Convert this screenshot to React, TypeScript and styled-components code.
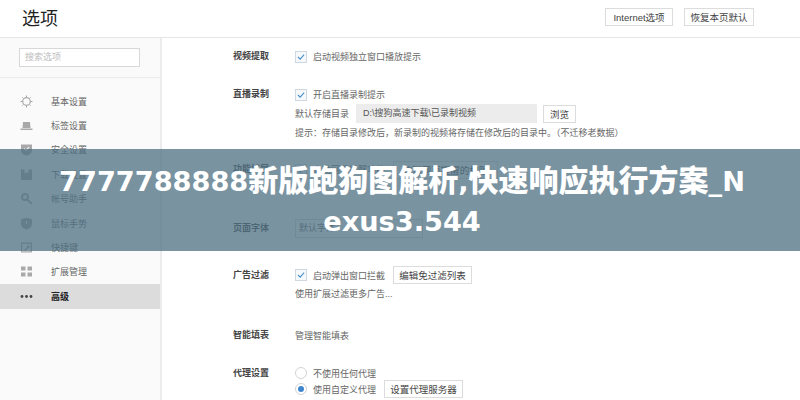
import React from 'react';
import styled, { createGlobalStyle } from 'styled-components';

const FONT = '"Liberation Sans", "Noto Sans CJK SC", sans-serif';

const GlobalStyle = createGlobalStyle`
  html, body {
    margin: 0;
    padding: 0;
    background: #fff;
  }
  body {
    width: 800px;
    height: 400px;
    overflow: hidden;
    font-family: ${FONT};
  }
`;

const Page = styled.div`
  position: relative;
  width: 800px;
  height: 400px;
  overflow: hidden;
  display: flex;
  flex-direction: column;
  color: #666;
  font-size: 9px;
`;

const Header = styled.header`
  height: 38px;
  flex: none;
  box-sizing: border-box;
  border-bottom: 1px solid #e6e6e6;
  display: flex;
  align-items: center;
  padding: 0 46px 3px 22px;
  gap: 11px;
`;

const Title = styled.h1`
  margin: 0 auto 0 0;
  font-size: 18px;
  font-weight: 400;
  color: #222;
`;

const Button = styled.button`
  height: 18px;
  flex: none;
  box-sizing: border-box;
  padding: 0;
  border: 1px solid #dcdcdc;
  background: #fff;
  color: #444;
  font-family: ${FONT};
  font-size: 9.5px;
  white-space: nowrap;
  width: ${p => p.$width}px;
  margin-left: ${p => p.$offset || 0}px;
`;

const Body = styled.div`
  flex: 1;
  display: flex;
  min-height: 0;
`;

const Sidebar = styled.aside`
  width: 162px;
  flex: none;
  box-sizing: border-box;
  background: #fafafa;
  border-right: 2px solid #ececec;
`;

const SearchBar = styled.div`
  height: 40px;
  box-sizing: border-box;
  border-bottom: 1px solid #ececec;
  padding: 10px 20px 0 19px;
`;

const SearchBox = styled.div`
  height: 19px;
  box-sizing: border-box;
  border: 1px solid #d8d8d8;
  background: #fff;
  color: #bdbdbd;
  line-height: 17px;
  padding-left: 5px;
`;

const NavList = styled.nav`
  padding-top: 11px;
`;

const NavItem = styled.div`
  height: 24.4px;
  display: flex;
  align-items: center;
  padding-left: 20px;
  gap: 18px;
  color: ${p => (p.$active ? '#222' : '#666')};
  font-weight: ${p => (p.$active ? 700 : 400)};
  background: ${p => (p.$active ? '#dcdcdc' : 'transparent')};
`;

const NavIcon = styled.svg`
  width: 13px;
  height: 13px;
  flex: none;
  color: ${p => (p.$active ? '#444' : '#a9a9a9')};
`;

const Content = styled.main`
  flex: 1;
  padding: 9px 0 0 71px;
  display: flex;
  flex-direction: column;
`;

const Section = styled.section`
  display: grid;
  grid-template-columns: 62px 1fr;
  height: ${p => p.$height}px;
`;

const Label = styled.div`
  font-weight: 700;
  color: #444;
  line-height: 18px;
`;

const Controls = styled.div`
  display: flex;
  flex-direction: column;
`;

const Line = styled.div`
  height: ${p => p.$height || 19}px;
  display: flex;
  align-items: center;
  gap: 6px;
  white-space: nowrap;
`;

const Checkbox = styled.span`
  width: 12px;
  height: 12px;
  flex: none;
  box-sizing: border-box;
  border: 1px solid #cfd8e0;
  background: #f6f9fc;
  display: flex;
  align-items: center;
  justify-content: center;
`;

const Radio = styled.span`
  width: 12px;
  height: 12px;
  flex: none;
  box-sizing: border-box;
  border: 1px solid #d4d4d4;
  border-radius: 50%;
  background: #fff;
  display: flex;
  align-items: center;
  justify-content: center;

  &::after {
    content: '';
    width: 6px;
    height: 6px;
    border-radius: 50%;
    background: ${p => (p.$checked ? '#3f86cf' : 'transparent')};
  }
`;

const PathField = styled.div`
  width: 181px;
  height: 19px;
  margin-left: 1px;
  box-sizing: border-box;
  padding-left: 7px;
  background: #ececec;
  color: #555;
  line-height: 19px;
`;

const SelectBox = styled.div`
  width: 128px;
  height: 19px;
  box-sizing: border-box;
  border: 1px solid #d8d8d8;
  padding-left: 3px;
  line-height: 17px;
`;

const Banner = styled.div`
  position: absolute;
  left: 0;
  top: 149px;
  width: 800px;
  height: 102px;
  box-sizing: border-box;
  padding: 9px 50px 0 54px;
  background: rgba(80, 113, 132, 0.76);
  color: #fff;
  font-family: "Noto Sans CJK SC", sans-serif;
  font-size: 30px;
  font-weight: 900;
  line-height: 40px;
  text-align: center;
  word-break: break-all;
`;

const BannerLatin = styled.span`
  font-family: "DejaVu Sans", sans-serif;
  font-size: 27.2px;
  font-weight: 700;
  line-height: 0;
`;

const Check = () => (
  <Checkbox>
    <svg width="10" height="10" viewBox="0 0 10 10" fill="none">
      <path d="M2 5 L4.200 7.100 L8.100 2.700" stroke="#4a90c8" strokeWidth="1.1" />
    </svg>
  </Checkbox>
);

const icons: Record<string, React.ReactNode> = {
  gear: (
    <>
      <circle cx="6.500" cy="6.500" r="3.800" fill="none" stroke="currentColor" strokeWidth="1.200" />
      <path d="M6.500 0.500v2M6.500 10.500v2M0.500 6.500h2M10.500 6.500h2M2.300 2.300l1.300 1.300M9.400 9.400l1.300 1.300M2.300 10.700l1.300-1.300M9.400 3.600l1.300-1.300" stroke="currentColor" strokeWidth="1" />
    </>
  ),
  tab: <path d="M3 3h7l0.500 6h-8zM0.500 9.500h12v1.500h-12z" fill="currentColor" />,
  shield: <path d="M1 1.500h11v6c0 3-3 4.500-5.500 5C4 12 1 10.500 1 7.500z M3.500 6l2.500 2 3.500-3.500-0.800-0.700-2.700 2.700-1.700-1.300z" fill="currentColor" fillRule="evenodd" />,
  book: <path d="M1 1.500h3.500v4l2-1.500 2 1.500v-4h3.500v10.500h-11z" fill="currentColor" />,
  key: <path d="M5 1a4 4 0 0 1 3.300 6.200l4.200 3.800-1.300 1.500-4.400-4A4 4 0 1 1 5 1zm0 2a2 2 0 1 0 0 4 2 2 0 0 0 0-4z" fill="currentColor" fillRule="evenodd" />,
  mouse: <path d="M6.500 1c3.200 0 5.500 1.500 5.500 1.500v4.500c0 3-3 5-5.500 5.500-2.500-0.500-5.500-2.500-5.500-5.500v-4.500S3.300 1 6.500 1zM6 4v3h1V4z" fill="currentColor" fillRule="evenodd" />,
  shortcut: <path d="M1 1.500h11v10h-11zM2.200 2.700v7.600h8.600v-7.600zM4 9l3.500-3.500-1.500-1h3.500v3.500l-1-1.500-3.500 3.500z" fill="currentColor" fillRule="evenodd" />,
  grid: <path d="M1 1.500h4.500v4h-4.500zM7.500 1.500h4.500v4h-4.500zM1 7.500h4.500v4h-4.500zM7.500 7.500h4.500v4h-4.500z" fill="currentColor" />,
  more: (
    <>
      <circle cx="2" cy="6.500" r="1.400" fill="currentColor" />
      <circle cx="6.500" cy="6.500" r="1.400" fill="currentColor" />
      <circle cx="11" cy="6.500" r="1.400" fill="currentColor" />
    </>
  ),
};

const navItems = [
  ['gear', '基本设置'],
  ['tab', '标签设置'],
  ['shield', '安全设置'],
  ['book', '下载设置'],
  ['key', '帐号助手'],
  ['mouse', '鼠标手势'],
  ['shortcut', '快捷键'],
  ['grid', '扩展管理'],
  ['more', '高级'],
];

export default function App() {
  return (
    <Page>
      <GlobalStyle />
      <Header>
        <Title>选项</Title>
        <Button $width={68}>Internet选项</Button>
        <Button $width={70}>恢复本页默认</Button>
      </Header>
      <Body>
        <Sidebar>
          <SearchBar>
            <SearchBox>搜索选项</SearchBox>
          </SearchBar>
          <NavList>
            {navItems.map(([icon, text]) => (
              <NavItem key={text} $active={icon === 'more'}>
                <NavIcon viewBox="0 0 13 13" $active={icon === 'more'}>
                  {icons[icon]}
                </NavIcon>
                {text}
              </NavItem>
            ))}
          </NavList>
        </Sidebar>
        <Content>
          <Section $height={38}>
            <Label>视频提取</Label>
            <Controls>
              <Line>
                <Check />
                启动视频独立窗口播放提示
              </Line>
            </Controls>
          </Section>
          <Section $height={75}>
            <Label>直播录制</Label>
            <Controls>
              <Line>
                <Check />
                开启直播录制提示
              </Line>
              <Line>
                默认存储目录
                <PathField>D:\搜狗高速下载\已录制视频</PathField>
                <Button $width={33}>浏览</Button>
              </Line>
              <Line>提示：存储目录修改后，新录制的视频将存储在修改后的目录中。（不迁移老数据）</Line>
            </Controls>
          </Section>
          <Section $height={59}>
            <Label>功能扩展</Label>
            <Controls>
              <Line>
                <Check />
                启动网页提醒功能
                <Button $width={105} $offset={2}>管理网页提醒的权限</Button>
              </Line>
            </Controls>
          </Section>
          <Section $height={47}>
            <Label>页面字体</Label>
            <Controls>
              <SelectBox>默认字体</SelectBox>
            </Controls>
          </Section>
          <Section $height={60}>
            <Label>广告过滤</Label>
            <Controls>
              <Line $height={18}>
                <Check />
                启动弹出窗口拦截
                <Button $width={79} $offset={2}>编辑免过滤列表</Button>
              </Line>
              <Line $height={18}>使用扩展过滤更多广告...</Line>
            </Controls>
          </Section>
          <Section $height={38}>
            <Label>智能填表</Label>
            <Controls>
              <Line>管理智能填表</Line>
            </Controls>
          </Section>
          <Section $height={36}>
            <Label>代理设置</Label>
            <Controls>
              <Line $height={18}>
                <Radio />
                不使用任何代理
              </Line>
              <Line $height={14}>
                <Radio $checked />
                使用自定义代理
                <Button $width={79} $offset={2}>设置代理服务器</Button>
              </Line>
            </Controls>
          </Section>
        </Content>
      </Body>
      <Banner>
        <BannerLatin>7777788888</BannerLatin>新版跑狗图解析<BannerLatin>,</BannerLatin>快速响应执行方案<BannerLatin>_Nexus3.544</BannerLatin>
      </Banner>
    </Page>
  );
}
